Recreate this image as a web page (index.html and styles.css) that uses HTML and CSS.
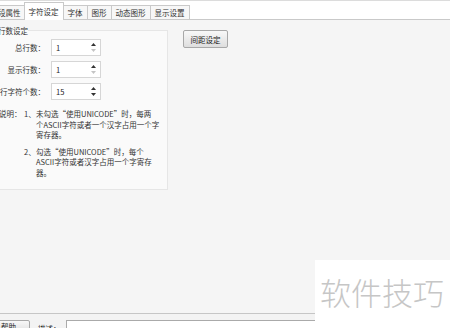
FILE: index.html
```html
<!DOCTYPE html>
<html lang="zh-CN">
<head>
    <meta charset="UTF-8">
    <title>字符设定</title>
    <link rel="stylesheet" href="styles.css">
</head>
<body>
    <div class="window">
        <div class="tabs">
            <div class="tab tab-first">段属性</div>
            <div class="tab active">字符设定</div>
            <div class="tab">字体</div>
            <div class="tab">图形</div>
            <div class="tab">动态图形</div>
            <div class="tab">显示设置</div>
        </div>
        <div class="page">
            <fieldset class="group">
                <legend>行数设定</legend>
                <div class="form-grid">
                    <label>总行数：</label>
                    <div class="spin">
                        <span class="spin-value">1</span>
                        <span class="spin-arrows">
                            <svg width="5" height="3" viewBox="0 0 5 3"><path d="M0 3 L2.5 0 L5 3 Z" fill="#333"/></svg>
                            <svg width="5" height="3" viewBox="0 0 5 3"><path d="M0 0 L2.5 3 L5 0 Z" fill="#c4c4c4"/></svg>
                        </span>
                    </div>
                    <label>显示行数：</label>
                    <div class="spin">
                        <span class="spin-value">1</span>
                        <span class="spin-arrows">
                            <svg width="5" height="3" viewBox="0 0 5 3"><path d="M0 3 L2.5 0 L5 3 Z" fill="#333"/></svg>
                            <svg width="5" height="3" viewBox="0 0 5 3"><path d="M0 0 L2.5 3 L5 0 Z" fill="#c4c4c4"/></svg>
                        </span>
                    </div>
                    <label>每行字符个数：</label>
                    <div class="spin">
                        <span class="spin-value">15</span>
                        <span class="spin-arrows">
                            <svg width="5" height="3" viewBox="0 0 5 3"><path d="M0 3 L2.5 0 L5 3 Z" fill="#333"/></svg>
                            <svg width="5" height="3" viewBox="0 0 5 3"><path d="M0 0 L2.5 3 L5 0 Z" fill="#333"/></svg>
                        </span>
                    </div>
                </div>
                <div class="note">
                    <div class="note-label">说明：</div>
                    <div class="note-list">
                        <div class="note-item">
                            <span class="note-num">1、</span>
                            <span class="note-text">未勾选“使用UNICODE”时，每两<br>个ASCII字符或者一个汉字占用一个字<br>寄存器。</span>
                        </div>
                        <div class="note-item">
                            <span class="note-num">2、</span>
                            <span class="note-text">勾选“使用UNICODE”时，每个<br>ASCII字符或者汉字占用一个字寄存<br>器。</span>
                        </div>
                    </div>
                </div>
            </fieldset>
            <button class="btn btn-spacing">间距设定</button>
        </div>
        <div class="bottom-bar">
            <button class="btn btn-help">帮助</button>
            <span class="desc-label">描述：</span>
            <div class="desc-input"></div>
        </div>
        <div class="watermark">软件技巧</div>
    </div>
</body>
</html>
```

FILE: styles.css
```css
body {
    margin: 0;
    font-family: "Noto Sans CJK SC", "Liberation Sans", sans-serif;
    font-size: 7.5px;
    color: #333;
    background-color: #f5f5f5;
    overflow: hidden;
}
.window {
    position: relative;
    width: 450px;
    height: 328px;
    overflow: hidden;
}
.tabs {
    display: flex;
    align-items: flex-end;
    height: 18px;
    background-color: #fff;
    border-top: 1px solid #dcdcdc;
    border-bottom: 1px solid #c9c9c9;
}
.tab {
    height: 13px;
    line-height: 13px;
    padding: 0 4px;
    border: 1px solid #c9c9c9;
    border-bottom: none;
    border-left: none;
    background-color: #f7f7f7;
    white-space: nowrap;
}
.tab-first {
    margin-left: -7px;
    padding-left: 5px;
    padding-right: 3px;
}
.tab.active {
    height: 17px;
    line-height: 17px;
    margin-bottom: -1px;
    padding: 0 4px 0 4px;
    background-color: #fff;
    border-left: 1px solid #c9c9c9;
    margin-left: -1px;
}
.page {
    display: flex;
    align-items: flex-start;
    height: 293px;
}
.group {
    margin: 5px 0 0 -10px;
    padding: 0 0 11px 8px;
    width: 178px;
    box-sizing: border-box;
    border: 1px solid #e6e6e6;
    background-color: #fafafa;
}
.group legend {
    padding: 0;
    margin-left: -1px;
    line-height: 11px;
}
.form-grid {
    display: grid;
    grid-template-columns: 46px 50px;
    column-gap: 6px;
    row-gap: 5px;
    align-items: center;
    margin-top: 3px;
}
.form-grid label {
    display: flex;
    justify-content: flex-end;
    white-space: nowrap;
}
.spin {
    display: flex;
    align-items: center;
    justify-content: space-between;
    height: 15px;
    border: 1px solid #d6d6d6;
    background-color: #fff;
    padding: 0 4px 0 4px;
    color: #222;
}
.spin-arrows {
    display: flex;
    flex-direction: column;
    gap: 3px;
}
.spin-arrows svg {
    display: block;
}
.note {
    display: flex;
    margin-top: 9px;
}
.note-label {
    width: 25px;
    flex-shrink: 0;
    line-height: 10.5px;
}
.note-item {
    display: flex;
    line-height: 10.5px;
    margin-bottom: 6px;
}
.note-item:last-child {
    margin-bottom: 0;
}
.note-num {
    width: 12px;
    flex-shrink: 0;
}
.note-text {
    white-space: nowrap;
}
.btn {
    font-family: inherit;
    font-size: 7.5px;
    color: #222;
    border: 1px solid #a8a8a8;
    border-radius: 2px;
    background: linear-gradient(#f8f8f8, #dedede);
    padding: 0;
}
.btn-spacing {
    width: 45px;
    height: 18px;
    margin: 10px 0 0 15px;
}
.bottom-bar {
    display: flex;
    align-items: flex-start;
    height: 14px;
    border-top: 1px solid #c6c6c6;
    background-color: #f3f3f3;
}
.btn-help {
    width: 38px;
    height: 14px;
    margin: 6px 0 0 -8px;
    text-align: left;
    padding-left: 8px;
    line-height: 12px;
}
.desc-label {
    margin: 9px 0 0 8px;
}
.desc-input {
    flex: 1;
    height: 12px;
    margin: 6px 0 0 5px;
    border: 1px solid #aaa;
    background-color: #fff;
}
.watermark {
    position: absolute;
    left: 315px;
    top: 260px;
    width: 135px;
    height: 68px;
    background-color: #fff;
    color: #c6c6c6;
    font-size: 31px;
    font-weight: 300;
    line-height: 64px;
    padding-left: 5px;
    box-sizing: border-box;
    white-space: nowrap;
}
```
